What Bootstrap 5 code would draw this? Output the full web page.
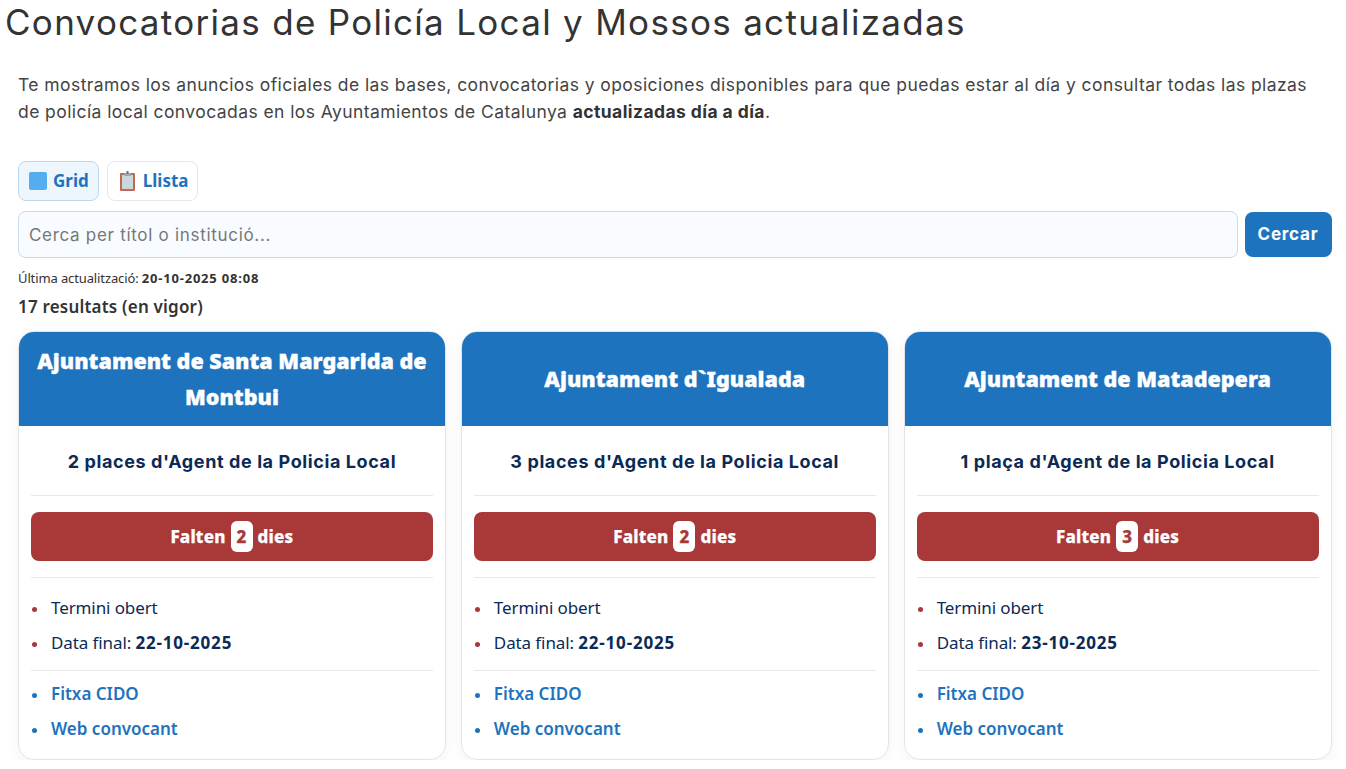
<!DOCTYPE html>
<html lang="ca">

<head>
    <meta charset="UTF-8">
    <meta name="viewport" content="width=device-width, initial-scale=1.0">
    <title>Convocatorias</title>
    <link href="https://cdn.jsdelivr.net/npm/bootstrap@5.3.0/dist/css/bootstrap.min.css" rel="stylesheet">
    <style>
        body { font-family: "Noto Sans", "Open Sans", sans-serif; color: #333; background: #fff; overflow: hidden; }
        .page-title { font-family: Inter, sans-serif; font-weight: 400; font-size: 35px; line-height: 44px; color: #333; margin: 0 0 0 5px; letter-spacing: 1.3px; }
        .intro { font-family: Inter, sans-serif; font-size: 17.5px; line-height: 27px; margin: 27px 14px 0 18px; color: #444; letter-spacing: .42px; }
        .intro strong { color: #333; }
        .tools { padding: 0 14.5px 0 18px; }
        .view-row { margin-top: 36px; }
        .search-row { margin-top: 10px; gap: 7px; }
        .view-btn { font-weight: 700; font-size: 17px; color: #1e73be; background: #fff; border: 1px solid #e4e8ee; border-radius: 8px; height: 40px; padding: 0 9px 0 10px; gap: 6px; }
        .view-btn.is-on { background: #eef6fd; border-color: #bcd7f0; }
        .search-input { font-family: Inter, sans-serif; font-size: 17px; height: 47px; background: #f8fbff; border: 1px solid #c9d9ee; border-radius: 8px; padding: 0 10px; letter-spacing: .7px; }
        .search-input::placeholder { color: #777; }
        .search-btn { font-family: Inter, sans-serif; font-weight: 700; font-size: 17px; letter-spacing: .8px; background: #1e73be; color: #fff; border: 0; border-radius: 8px; height: 45px; width: 87px; padding: 0; }
        .updated { font-size: 13px; line-height: 18px; margin-top: 11px; letter-spacing: -.12px; }
        .updated strong { letter-spacing: .8px; }
        .results { font-size: 17px; font-weight: 600; line-height: 24px; margin-top: 8px; letter-spacing: .2px; }
        .cards { display: grid; grid-template-columns: repeat(3, 1fr); gap: 15px; margin-top: 12px; }
        .conv-card { border: 1px solid #e2e4e8; border-radius: 16px; overflow: hidden; box-shadow: 0 4px 14px rgba(0,0,0,.05); height: 429px; }
        .conv-head { background: #1e73be; color: #fff; height: 94px; padding: 0 12px; font-weight: 900; font-size: 21.5px; line-height: 36px; text-align: center; -webkit-text-stroke: .35px #fff; }
        .conv-body { padding: 0 12px; }
        .conv-title { font-family: Inter, sans-serif; font-weight: 700; font-size: 18px; letter-spacing: .6px; color: #0b2a55; text-align: center; height: 70px; line-height: 71px; border-bottom: 1px solid #e6e8ec; }
        .conv-alert { background: #a93838; color: #fff; border-radius: 8px; height: 49px; margin: 16px 0; font-weight: 800; font-size: 17px; letter-spacing: .2px; -webkit-text-stroke: .25px #fff; }
        .conv-days { background: #fff; color: #a93838; border-radius: 6px; width: 22px; height: 31px; margin: 0 5px; -webkit-text-stroke: .25px #a93838; }
        .conv-list { list-style: none; margin: 0; padding: 12px 0 10px; border-top: 1px solid #e6e8ec; font-size: 17px; color: #0b2a55; letter-spacing: -.1px; }
        .conv-list li { height: 35px; line-height: 35px; padding-left: 20px; position: relative; }
        .conv-list li::before { content: ""; position: absolute; left: 1px; top: 17px; width: 5px; height: 5px; border-radius: 50%; background: #a93838; }
        .conv-list.links li::before { background: #1e73be; }
        .conv-list.links { padding: 5px 0 0; letter-spacing: 0; }
        .conv-list a { color: #1e73be; font-weight: 600; text-decoration: none; }
        .conv-list strong { font-weight: 700; letter-spacing: .8px; }
    </style>
</head>

<body>
    <h1 class="page-title">Convocatorias de Policía Local y Mossos actualizadas</h1>
    <p class="intro mb-0">Te mostramos los anuncios oficiales de las bases, convocatorias y oposiciones disponibles para que puedas estar al día y consultar todas las plazas de policía local convocadas en los Ayuntamientos de Catalunya <strong>actualizadas día a día</strong>.</p>

    <div class="tools">
        <div class="d-flex gap-2 view-row">
            <button type="button" class="view-btn is-on d-flex align-items-center">
                <svg width="18" height="18" viewBox="0 0 18 18"><rect width="18" height="18" rx="2" fill="#55acee"/></svg>Grid
            </button>
            <button type="button" class="view-btn d-flex align-items-center">
                <svg width="19" height="20" viewBox="0 0 19 20"><rect x="2" y="2" width="15" height="18" rx="1" fill="#c1694f"/><rect x="4" y="4" width="11" height="14" fill="#ccd6dd"/><rect x="6" y="2" width="7" height="3" rx="1" fill="#99aab5"/><rect x="8.5" y="0" width="2" height="3" fill="#66757f"/></svg>Llista
            </button>
        </div>

        <div class="d-flex align-items-center search-row">
            <input type="text" class="form-control search-input" placeholder="Cerca per títol o institució...">
            <button type="button" class="search-btn flex-shrink-0">Cercar</button>
        </div>

        <div class="updated">Última actualització: <strong>20-10-2025 08:08</strong></div>
        <div class="results">17 resultats (en vigor)</div>

        <div class="cards" id="cards"></div>
    </div>

    <script src="https://cdn.jsdelivr.net/npm/bootstrap@5.3.0/dist/js/bootstrap.bundle.min.js"></script>
    <script>
        const convocatories = [
            { ajuntament: 'Ajuntament de Santa Margarida de Montbui', places: "2 places d'Agent de la Policia Local", dies: 2, data: '22-10-2025' },
            { ajuntament: 'Ajuntament d`Igualada', places: "3 places d'Agent de la Policia Local", dies: 2, data: '22-10-2025' },
            { ajuntament: 'Ajuntament de Matadepera', places: "1 plaça d'Agent de la Policia Local", dies: 3, data: '23-10-2025' }
        ];

        document.getElementById('cards').innerHTML = convocatories.map(c => `
            <div class="conv-card">
                <div class="conv-head d-flex align-items-center justify-content-center">${c.ajuntament}</div>
                <div class="conv-body">
                    <div class="conv-title">${c.places}</div>
                    <div class="conv-alert d-flex align-items-center justify-content-center">Falten <span class="conv-days d-flex align-items-center justify-content-center">${c.dies}</span> dies</div>
                    <ul class="conv-list">
                        <li>Termini obert</li>
                        <li>Data final: <strong>${c.data}</strong></li>
                    </ul>
                    <ul class="conv-list links">
                        <li><a href="#">Fitxa CIDO</a></li>
                        <li><a href="#">Web convocant</a></li>
                    </ul>
                </div>
            </div>`).join('');
    </script>
</body>

</html>
